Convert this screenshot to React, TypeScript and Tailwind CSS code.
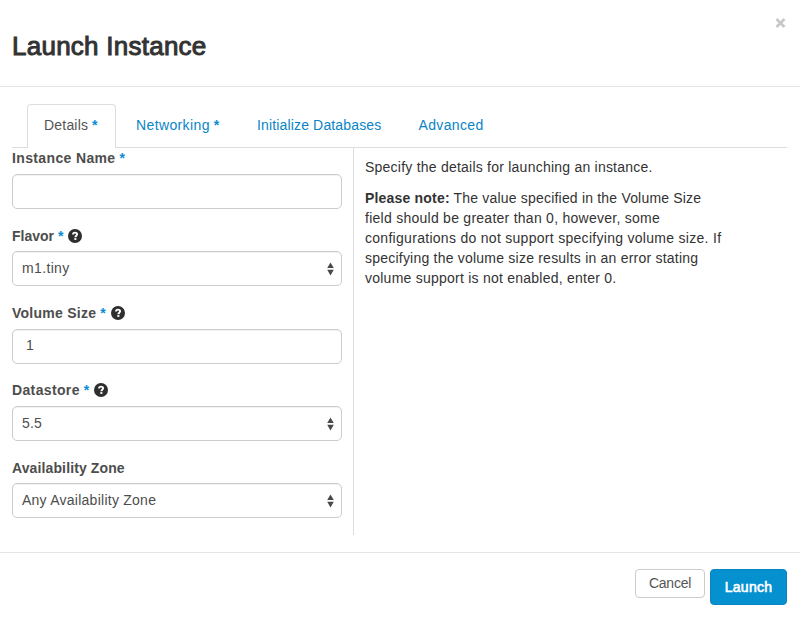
import type { ReactNode } from "react";

function Star({ className = "" }: { className?: string }) {
  return <span className={`font-bold text-[#0a8cd2] ${className}`}>*</span>;
}

function HelpIcon() {
  return (
    <svg className="ml-[5px] h-[14px] w-[14px]" viewBox="0 0 14 14">
      <circle cx="7" cy="7" r="7" fill="#2e2e2e" />
      <path
        d="M5 5.6C5 4.2 5.8 3.6 7 3.6s2.1.6 2.1 1.7c0 1.4-1.7 1.5-1.7 2.9"
        fill="none"
        stroke="#fff"
        strokeWidth="1.9"
      />
      <rect x="6.3" y="9.1" width="2.1" height="1.8" fill="#fff" />
    </svg>
  );
}

function Arrows() {
  return (
    <svg className="h-[14px] w-[7px]" viewBox="0 0 7 14">
      <path d="M3.5 0.4L6.8 6H0.2zM3.5 13.4L6.8 7.8H0.2z" fill="#4a4a4a" />
    </svg>
  );
}

type FieldProps = {
  label: ReactNode;
  required?: boolean;
  help?: boolean;
  select?: boolean;
  value?: ReactNode;
};

function Field({ label, required, help, select, value }: FieldProps) {
  return (
    <div className="h-[77.36px]">
      <div className="flex h-[26px] items-start pt-[0.2px] text-[14px] leading-5 font-bold text-[#4d4d4d]">
        {label}
        {required && <Star className="ml-[4px]" />}
        {help && <span className="flex h-5 items-center"><HelpIcon /></span>}
      </div>
      <div
        className={`flex h-[35px] items-center justify-between rounded-[5px] border border-[#ccc] pb-px text-[14px] text-[#4d4d4d] shadow-[inset_0_1px_1px_rgba(0,0,0,0.06)] ${select ? "pr-[7px] pl-[9px]" : "px-[13px]"}`}
      >
        <span>{value}</span>
        {select && <span className="pt-px"><Arrows /></span>}
      </div>
    </div>
  );
}

export default function App() {
  return (
    <div className="flex h-[617px] w-[800px] flex-col overflow-hidden bg-white font-['Liberation_Sans',Arial,sans-serif] text-[14px] text-[#333]">
      <header className="flex h-[87px] shrink-0 items-start justify-between border-b border-[#e5e5e5] pr-[14px] pl-[12px]">
        <h1 className="pt-[31px] text-[26px] leading-[30px] font-normal [-webkit-text-stroke:1px_#333]">
          <span className="tracking-[0.25px]">Launch Instance</span>
        </h1>
        <svg className="mt-[18px] h-[10px] w-[11px]" viewBox="0 0 11 10">
          <path d="M1.5 1L9.5 9M9.5 1L1.5 9" stroke="#c8c8c8" strokeWidth="2.7" />
        </svg>
      </header>

      <nav className="mx-[12px] mt-[17px] flex h-[44px] w-[775px] shrink-0 text-[#0a84c6]">
        <div className="w-[14.5px] border-b border-[#ddd]" />
        <div className="w-[89.5px] rounded-t-[4px] border border-b-0 border-[#ddd] pt-[10px] pl-[16.5px] leading-5 text-[#555]">
          <span className="tracking-[0.2px]">Details</span> <Star />
        </div>
        <div className="w-[121px] border-b border-[#ddd] pt-[11px] pl-[20px] leading-5">
          <span className="tracking-[0.38px]">Networking</span> <Star />
        </div>
        <div className="w-[162px] border-b border-[#ddd] pt-[11px] pl-[20px] leading-5">
          <span className="tracking-[0.15px]">Initialize Databases</span>
        </div>
        <div className="flex-1 border-b border-[#ddd] pt-[11px] pl-[19.5px] leading-5">
          <span className="tracking-[0.35px]">Advanced</span>
        </div>
      </nav>

      <main className="flex h-[387px] shrink-0 pl-[12px]">
        <form className="w-[330px]">
          <Field label={<span className="tracking-[0.36px]">Instance Name</span>} required />
          <Field
            label={<span>Flavor</span>}
            required
            help
            select
            value={<span className="tracking-[0.35px]">m1.tiny</span>}
          />
          <Field
            label={<span className="tracking-[0.26px]">Volume Size</span>}
            required
            help
            value="1"
          />
          <Field
            label={<span className="tracking-[0.36px]">Datastore</span>}
            required
            help
            select
            value={<span className="tracking-[0.15px]">5.5</span>}
          />
          <Field
            label={<span className="tracking-[0.12px]">Availability Zone</span>}
            select
            value={<span className="tracking-[0.25px]">Any Availability Zone</span>}
          />
        </form>
        <section className="ml-[11px] border-l border-[#ddd] pt-[9px] pl-[11px] leading-5 whitespace-nowrap text-[#333]">
          <p className="mb-[11px]">
            <span className="tracking-[0.23px]">Specify the details for launching an instance.</span>
          </p>
          <p>
            <span className="tracking-[0.19px]"><b>Please note:</b> The value specified in the Volume Size</span><br />
            <span className="tracking-[0.26px]">field should be greater than 0, however, some</span><br />
            <span className="tracking-[0.29px]">configurations do not support specifying volume size. If</span><br />
            <span className="tracking-[0.22px]">specifying the volume size results in an error stating</span><br />
            <span className="tracking-[0.24px]">volume support is not enabled, enter 0.</span>
          </p>
        </section>
      </main>

      <footer className="mt-[17px] flex flex-1 items-start justify-end border-t border-[#e5e5e5] pt-[16px] pr-[13px]">
        <button type="button" className="h-[29px] w-[70px] rounded-[4px] border border-[#ccc] pb-px text-[14px] leading-none text-[#555]">
          <span className="tracking-[-0.25px]">Cancel</span>
        </button>
        <button type="button" className="ml-[5px] h-[36px] w-[77px] rounded-[4px] border border-[#0a84c0] bg-[#0590d0] pb-px text-[14px] leading-none text-white [-webkit-text-stroke:0.6px_#fff]">
          <span className="tracking-[0.3px]">Launch</span>
        </button>
      </footer>
    </div>
  );
}
